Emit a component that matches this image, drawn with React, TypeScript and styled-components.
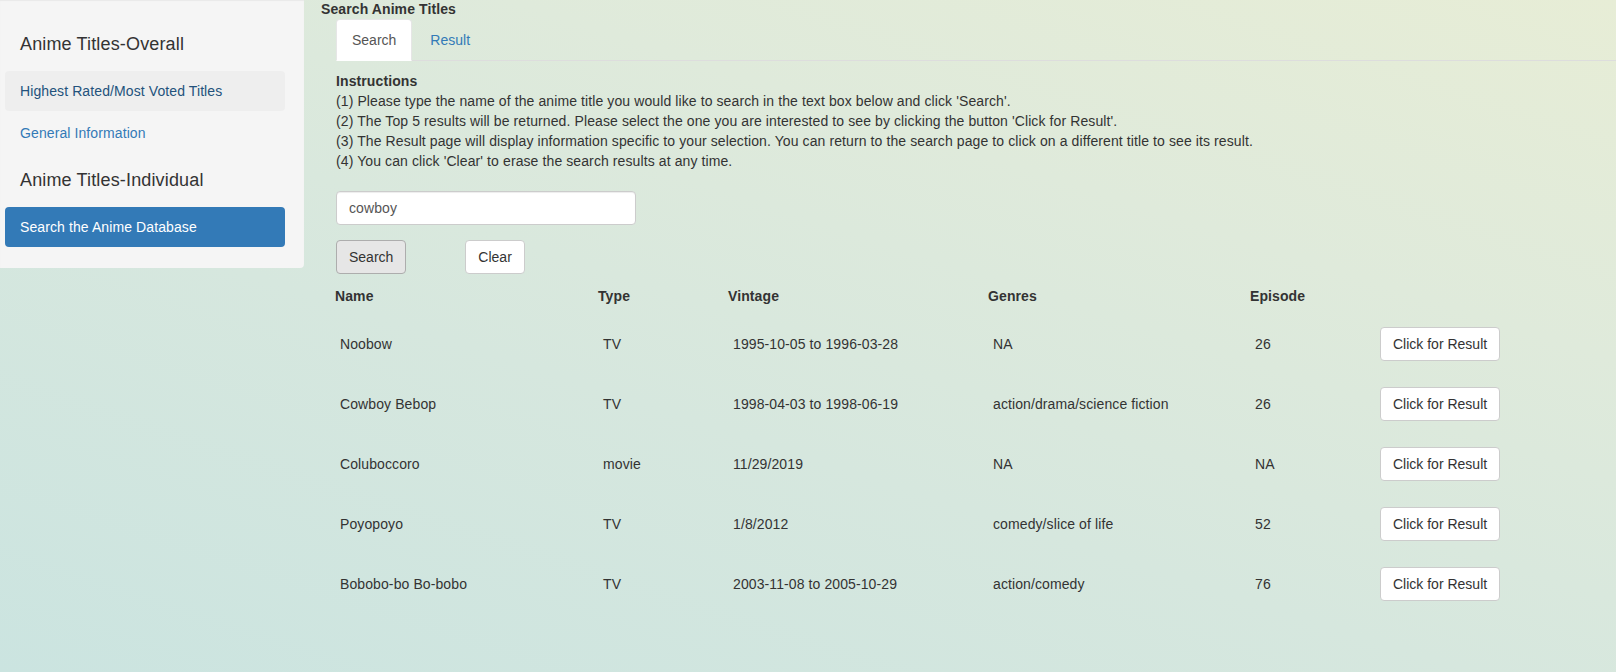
import React from "react";
import styled, { createGlobalStyle } from "styled-components";

const GlobalStyle = createGlobalStyle`
  html, body {
    margin: 0;
    padding: 0;
    height: 100%;
  }
  body {
    font-family: "Liberation Sans", Arial, Helvetica, sans-serif;
    font-size: 14px;
    line-height: 20px;
    letter-spacing: 0.1px;
    color: #333;
    overflow: hidden;
  }
  * { box-sizing: border-box; }
`;

const Page = styled.div`
  display: flex;
  align-items: flex-start;
  width: 100%;
  min-height: 672px;
  background: linear-gradient(18deg, #cbe4e0 0%, #d6e7de 40%, #dfeadb 70%, #e7edd6 100%);
`;

const Well = styled.nav`
  flex: 0 0 304px;
  display: flex;
  flex-direction: column;
  padding: 19px 19px 19px 5px;
  background: #f5f5f5;
  border-radius: 0 0 4px 0;
  box-shadow: inset 0 1px 1px rgba(0, 0, 0, 0.05);
`;

const NavHeader = styled.div`
  height: 50px;
  padding: 15px;
  font-size: 18px;
  line-height: 20px;
  letter-spacing: 0.15px;
  color: #333;
  & + * { margin-top: 2px; }
`;

const Pill = styled.a<{ $state?: "active" | "hover" }>`
  display: block;
  padding: 10px 15px;
  border-radius: 4px;
  text-decoration: none;
  font-size: 14px;
  line-height: 20px;
  margin-bottom: 2px;
  color: ${(p) => (p.$state === "active" ? "#fff" : p.$state === "hover" ? "#23527c" : "#337ab7")};
  background: ${(p) => (p.$state === "active" ? "#337ab7" : p.$state === "hover" ? "#eeeeee" : "transparent")};
`;

const Main = styled.main`
  flex: 1;
  margin-top: -1px;
  padding-left: 17px;
`;

const Title = styled.div`
  font-weight: bold;
  line-height: 20px;
`;

const TabArea = styled.div`
  margin-left: 15px;
`;

const TabBar = styled.div`
  display: flex;
  border-bottom: 1px solid #ddd;
`;

const Tab = styled.a<{ $active?: boolean }>`
  display: block;
  margin-bottom: -1px;
  margin-right: 2px;
  padding: 10px 15px;
  line-height: 20px;
  letter-spacing: 0;
  border: 1px solid ${(p) => (p.$active ? "#e6e6e6" : "transparent")};
  border-bottom-color: transparent;
  border-radius: 4px 4px 0 0;
  background: ${(p) => (p.$active ? "#fff" : "transparent")};
  color: ${(p) => (p.$active ? "#555" : "#337ab7")};
  text-decoration: none;
`;

const TabContent = styled.div`
  padding-top: 10px;
`;

const Instructions = styled.div`
  line-height: 20px;
`;

const InstructionsHead = styled.div`
  font-weight: bold;
`;

const TextInput = styled.input`
  display: block;
  margin-top: 20px;
  width: 300px;
  height: 34px;
  padding: 6px 12px;
  font-family: inherit;
  font-size: 14px;
  letter-spacing: 0.1px;
  color: #555;
  background: #fff;
  border: 1px solid #ccc;
  border-radius: 4px;
  box-shadow: inset 0 1px 1px rgba(0, 0, 0, 0.075);
  outline: none;
`;

const ButtonRow = styled.div`
  display: flex;
  gap: 59px;
  margin-top: 15px;
`;

const Button = styled.button<{ $pressed?: boolean }>`
  height: 34px;
  padding: 6px 12px;
  font-family: inherit;
  font-size: 14px;
  line-height: 20px;
  letter-spacing: 0;
  color: #333;
  background: ${(p) => (p.$pressed ? "#e6e6e6" : "#fff")};
  border: 1px solid ${(p) => (p.$pressed ? "#adadad" : "#ccc")};
  border-radius: 4px;
  cursor: pointer;
  white-space: nowrap;
`;

const Table = styled.div`
  margin-top: 12px;
  margin-left: -1px;
`;

const Row = styled.div<{ $head?: boolean }>`
  display: grid;
  grid-template-columns: 263px 130px 260px 262px 130px auto;
  align-items: center;
  height: ${(p) => (p.$head ? "20px" : "60px")};
  margin-bottom: ${(p) => (p.$head ? "8px" : "0")};
`;

const HeadCell = styled.div`
  font-weight: bold;
`;

const Cell = styled.div`
  padding-left: 5px;
`;

const ActionCell = styled.div`
  display: flex;
`;

const results = [
  { name: "Noobow", type: "TV", vintage: "1995-10-05 to 1996-03-28", genres: "NA", ep: "26" },
  { name: "Cowboy Bebop", type: "TV", vintage: "1998-04-03 to 1998-06-19", genres: "action/drama/science fiction", ep: "26" },
  { name: "Coluboccoro", type: "movie", vintage: "11/29/2019", genres: "NA", ep: "NA" },
  { name: "Poyopoyo", type: "TV", vintage: "1/8/2012", genres: "comedy/slice of life", ep: "52" },
  { name: "Bobobo-bo Bo-bobo", type: "TV", vintage: "2003-11-08 to 2005-10-29", genres: "action/comedy", ep: "76" },
];

export default function App() {
  return (
    <>
      <GlobalStyle />
      <Page>
        <Well>
          <NavHeader>Anime Titles-Overall</NavHeader>
          <Pill $state="hover" href="#">Highest Rated/Most Voted Titles</Pill>
          <Pill href="#">General Information</Pill>
          <NavHeader>Anime Titles-Individual</NavHeader>
          <Pill $state="active" href="#">Search the Anime Database</Pill>
        </Well>
        <Main>
          <Title>Search Anime Titles</Title>
          <TabArea>
            <TabBar>
              <Tab $active href="#">Search</Tab>
              <Tab href="#">Result</Tab>
            </TabBar>
            <TabContent>
              <Instructions>
                <InstructionsHead>Instructions</InstructionsHead>
                <div>(1) Please type the name of the anime title you would like to search in the text box below and click 'Search'.</div>
                <div>(2) The Top 5 results will be returned. Please select the one you are interested to see by clicking the button 'Click for Result'.</div>
                <div>(3) The Result page will display information specific to your selection. You can return to the search page to click on a different title to see its result.</div>
                <div>(4) You can click 'Clear' to erase the search results at any time.</div>
              </Instructions>
              <TextInput defaultValue="cowboy" />
              <ButtonRow>
                <Button $pressed>Search</Button>
                <Button>Clear</Button>
              </ButtonRow>
              <Table>
                <Row $head>
                  <HeadCell>Name</HeadCell>
                  <HeadCell>Type</HeadCell>
                  <HeadCell>Vintage</HeadCell>
                  <HeadCell>Genres</HeadCell>
                  <HeadCell>Episode</HeadCell>
                  <div />
                </Row>
                {results.map((r) => (
                  <Row key={r.name}>
                    <Cell>{r.name}</Cell>
                    <Cell>{r.type}</Cell>
                    <Cell>{r.vintage}</Cell>
                    <Cell>{r.genres}</Cell>
                    <Cell>{r.ep}</Cell>
                    <ActionCell>
                      <Button>Click for Result</Button>
                    </ActionCell>
                  </Row>
                ))}
              </Table>
            </TabContent>
          </TabArea>
        </Main>
      </Page>
    </>
  );
}
